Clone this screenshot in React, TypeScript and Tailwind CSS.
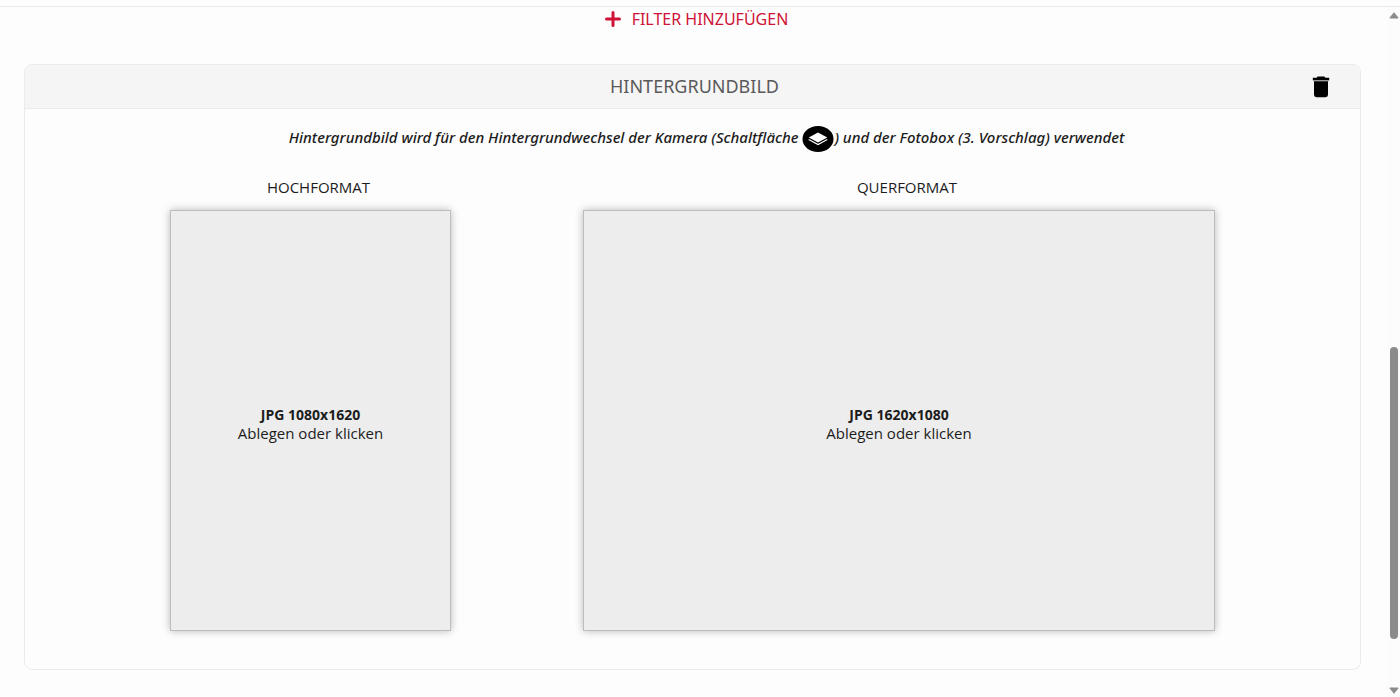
import React from "react";

function PlusIcon() {
  return (
    <svg viewBox="0 0 16 16" className="size-4" fill="none" stroke="currentColor" strokeWidth="3" strokeLinecap="round" aria-hidden="true">
      <path d="M8 1.5v13M1.5 8h13" />
    </svg>
  );
}

function TrashIcon() {
  return (
    <svg viewBox="0 0 18 22" className="h-[22px] w-[18px]" fill="currentColor" aria-hidden="true">
      <path d="M5.6 0.6h6.8l1 1.1H17.2V4H0.8V1.7H4.6z" />
      <path d="M0.8 4h16.4v1.2H0.8z" fill="#9a9a9a" />
      <path d="M2 5.2h14V18.8a2.4 2.4 0 0 1-2.4 2.4H4.4A2.4 2.4 0 0 1 2 18.8z" />
    </svg>
  );
}

function LayersIcon() {
  return (
    <svg viewBox="0 0 32 26" className="inline-block h-[26px] w-8 align-middle" role="img" aria-label="Hintergrund">
      <ellipse cx="16" cy="13" rx="15.5" ry="13" fill="#000" />
      <path d="M16 6.6l9.3 5-9.3 5-9.3-5z" fill="#fff" />
      <path d="M6.7 13.4l9.3 5.2 9.3-5.2" fill="none" stroke="#fff" strokeWidth="1.1" />
    </svg>
  );
}

type DropZoneProps = { title: string; size: string; shape: string };

function DropZone({ title, size, shape }: DropZoneProps) {
  return (
    <section className={`flex min-w-0 flex-col ${shape}`}>
      <h3 className="pl-4 text-center font-['Open_Sans','Noto_Sans',sans-serif] text-[15px] leading-5">{title}</h3>
      <button
        type="button"
        aria-label={`${title}: ${size} Ablegen oder klicken`}
        className="mt-[13px] flex w-full grow cursor-pointer flex-col items-center justify-center border border-[#bdbdbd] bg-[#ededed] pt-2 font-['Open_Sans','Noto_Sans',sans-serif] shadow-[0_0_8px_rgba(0,0,0,0.28)]"
      >
        <span className="text-sm leading-[18px] font-bold">{size}</span>
        <span className="text-[15px] leading-[18px]">Ablegen oder klicken</span>
      </button>
    </section>
  );
}

function ScrollRail() {
  return (
    <div className="flex w-[13px] shrink-0 flex-col items-center bg-[#fcfcfc] pt-[5px] pb-[3px]" aria-hidden="true">
      <svg viewBox="0 0 10 7" className="h-[7px] w-[10px]" fill="#8b8b8b">
        <path d="M5 0.3L9.3 5.6Q9.6 6.6 8.6 6.6H1.4Q0.4 6.6 0.7 5.6z" />
      </svg>
      <div className="grow-[328]" />
      <div className="w-2 grow-[292] rounded-full bg-[#8b8b8b]" />
      <div className="grow-[48]" />
      <svg viewBox="0 0 10 7" className="h-[7px] w-[10px]" fill="#8b8b8b">
        <path d="M5 6.7L9.3 1.4Q9.6 0.4 8.6 0.4H1.4Q0.4 0.4 0.7 1.4z" />
      </svg>
    </div>
  );
}

export default function App() {
  return (
    <div className="flex min-h-screen flex-col bg-[#fdfdfd] pt-1.5 font-['Noto_Sans','Open_Sans',sans-serif] text-[#1c1c1c]">
      <div className="flex grow border-t border-[#e9e9e9]">
        <main className="min-w-0 grow pr-[26px] pb-[26px] pl-6">
          <div className="flex justify-center pl-2">
            <button type="button" className="flex cursor-pointer items-center gap-[11px] text-base leading-6 text-[#cf1237]">
              <PlusIcon />
              FILTER HINZUFÜGEN
            </button>
          </div>

          <section className="mt-[33px] rounded-lg border border-[#ebebeb]">
            <header className="grid grid-cols-[1fr_auto_1fr] items-center rounded-t-lg border-b border-[#ebebeb] bg-[#f5f5f5] pr-[30px] pl-[34px]">
              <h2 className="col-start-2 text-lg leading-[43px] text-[#5a5a5a]">HINTERGRUNDBILD</h2>
              <button type="button" aria-label="Löschen" className="cursor-pointer justify-self-end text-black">
                <TrashIcon />
              </button>
            </header>

            <div className="pt-[15px] pb-[38px]">
              <p className="pl-7 text-center text-[15px] leading-[26px] font-medium italic">
                Hintergrundbild wird für den Hintergrundwechsel der Kamera (Schaltfläche <LayersIcon />) und der Fotobox (3. Vorschlag) verwendet
              </p>
              <div className="mt-[25px] flex justify-center gap-[132px]">
                <DropZone title="HOCHFORMAT" size="JPG 1080x1620" shape="w-[281px] aspect-[281/454]" />
                <DropZone title="QUERFORMAT" size="JPG 1620x1080" shape="w-[632px] aspect-[632/454]" />
              </div>
            </div>
          </section>
        </main>
        <ScrollRail />
      </div>
    </div>
  );
}
